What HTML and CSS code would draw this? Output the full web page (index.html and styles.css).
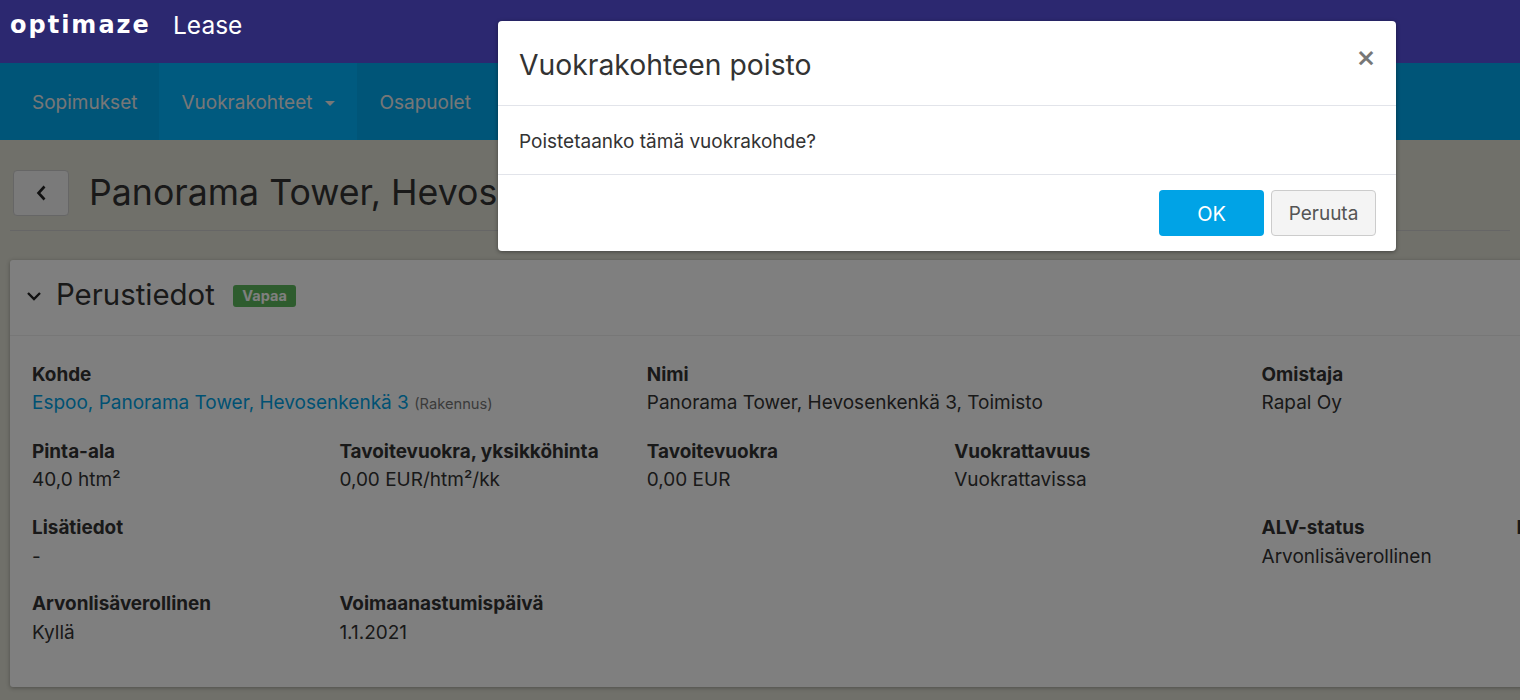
FILE: index.html
```html
<!DOCTYPE html>
<html lang="fi">
<head>
<meta charset="utf-8">
<title>Optimaze Lease</title>
<link rel="stylesheet" href="styles.css">
</head>
<body>
<header class="topbar">
  <span class="logo">optimaze</span>
  <span class="product">Lease</span>
</header>
<nav class="mainnav">
  <a class="navitem">Sopimukset</a>
  <a class="navitem navitem-active">Vuokrakohteet<span class="caret"></span></a>
  <a class="navitem">Osapuolet</a>
</nav>
<main class="page">
  <div class="titlerow">
    <button class="backbtn" aria-label="Takaisin">
      <svg width="14" height="20" viewBox="0 0 14 20"><path d="M10.5 3.5 L4.5 10 L10.5 16.5" fill="none" stroke="#222" stroke-width="2.6"/></svg>
    </button>
    <h1 class="pagetitle">Panorama Tower, Hevosenkenkä 3, Toimisto</h1>
  </div>
  <section class="card">
    <div class="cardhead">
      <svg class="chev" width="16" height="10" viewBox="0 0 16 10"><path d="M2 2 L8 8 L14 2" fill="none" stroke="#222" stroke-width="2.4"/></svg>
      <h2 class="cardtitle">Perustiedot</h2>
      <span class="badge">Vapaa</span>
    </div>
    <div class="fields">
      <div class="field span2"><div class="lbl">Kohde</div><div class="val"><a class="link">Espoo, Panorama Tower, Hevosenkenkä 3</a> <small class="note">(Rakennus)</small></div></div>
      <div class="field span2"><div class="lbl">Nimi</div><div class="val">Panorama Tower, Hevosenkenkä 3, Toimisto</div></div>
      <div class="field"><div class="lbl">Omistaja</div><div class="val">Rapal Oy</div></div>

      <div class="field"><div class="lbl">Pinta-ala</div><div class="val">40,0 htm²</div></div>
      <div class="field"><div class="lbl">Tavoitevuokra, yksikköhinta</div><div class="val">0,00 EUR/htm²/kk</div></div>
      <div class="field"><div class="lbl">Tavoitevuokra</div><div class="val">0,00 EUR</div></div>
      <div class="field"><div class="lbl">Vuokrattavuus</div><div class="val">Vuokrattavissa</div></div>
      <div class="field"></div>

      <div class="field span4"><div class="lbl">Lisätiedot</div><div class="val">-</div></div>
      <div class="field alv"><div class="lbl">ALV-status</div><div class="val">Arvonlisäverollinen</div><div class="lbl extra">I</div></div>

      <div class="field"><div class="lbl">Arvonlisäverollinen</div><div class="val">Kyllä</div></div>
      <div class="field"><div class="lbl">Voimaanastumispäivä</div><div class="val">1.1.2021</div></div>
    </div>
  </section>
</main>
<div class="backdrop"></div>
<div class="modal" role="dialog">
  <div class="modalhead">
    <h3 class="modaltitle">Vuokrakohteen poisto</h3>
    <span class="close">×</span>
  </div>
  <div class="modalbody">Poistetaanko tämä vuokrakohde?</div>
  <div class="modalfoot">
    <button class="btn btn-ok">OK</button>
    <button class="btn btn-cancel">Peruuta</button>
  </div>
</div>
</body>
</html>
```
FILE: styles.css
```css
* { box-sizing: border-box; }
html, body { margin: 0; height: 100%; overflow: hidden; }
body {
  font-family: "Inter", "Open Sans", sans-serif;
  font-size: 19px;
  line-height: 28.8px;
  color: #333;
  background: #e0e0d4;
  width: 1520px;
  height: 700px;
  position: relative;
}
.topbar {
  position: relative;
  z-index: 20;
  height: 63px;
  background: #2c2870;
  display: flex;
  align-items: flex-start;
  padding: 6px 0 0 10px;
  color: #fff;
}
.logo {
  font-family: "DejaVu Sans", sans-serif;
  font-weight: 700;
  font-size: 24px;
  line-height: 39px;
  letter-spacing: 2px;
  width: 163px;
}
.product { font-size: 24.5px; line-height: 38px; }
.mainnav {
  height: 77px;
  display: flex;
  padding-left: 10px;
  background: #00aaf0;
}
.navitem {
  padding: 0 22px;
  line-height: 79px;
  color: #eee;
}
.navitem-active { background: #00b4ff; }
.caret {
  display: inline-block;
  margin-left: 13px;
  vertical-align: middle;
  border: 5px solid transparent;
  border-top-color: #eee;
  border-bottom: 0;
}
.page { padding: 30px 10px 0; }
.titlerow {
  display: flex;
  align-items: center;
  gap: 20px;
  height: 61px;
  padding-left: 3px;
  border-bottom: 1px solid #ccc;
}
.backbtn {
  width: 56px;
  height: 46px;
  background: #f4f4f4;
  border: 1px solid #ccc;
  border-radius: 4px;
  display: flex;
  align-items: center;
  justify-content: center;
  padding: 0;
  margin-top: -14px;
}
.pagetitle {
  margin: -16px 0 0;
  font-size: 35.7px;
  font-weight: 400;
  line-height: 46px;
  color: #333;
  white-space: nowrap;
}
.card {
  margin-top: 29px;
  width: 1600px;
  height: 427px;
  background: #fff;
  border-radius: 3px;
  box-shadow: 0 1px 4px rgba(0,0,0,.3);
}
.cardhead {
  height: 76px;
  border-bottom: 1px solid #eee;
  display: flex;
  align-items: center;
  padding-left: 16px;
  padding-bottom: 6px;
}
.chev { margin-right: 14px; margin-top: 3px; }
.cardtitle { margin: 0 18px 0 0; font-size: 29.4px; font-weight: 400; line-height: 1.2; }
.badge {
  background: #5cb85c;
  color: #fff;
  font-size: 14.5px;
  font-weight: 700;
  line-height: 22px;
  padding: 0 9.5px;
  border-radius: 3px;
  margin-top: 2px;
}
.fields {
  display: grid;
  grid-template-columns: repeat(5, 307.4px);
  row-gap: 18.5px;
  padding: 24.6px 0 0 22px;
}
.span2 { grid-column: span 2; }
.span4 { grid-column: span 4; }
.lbl { font-weight: 700; white-space: nowrap; font-size: 18.9px; }
.val { white-space: nowrap; }
.link { color: #00a3e6; }
.note { font-size: 14.7px; color: #777; }
.alv { position: relative; }
.extra { position: absolute; left: 255px; top: 0; }
.backdrop {
  position: absolute;
  inset: 0;
  background: rgba(0,0,0,.5);
  z-index: 10;
}
.modal {
  position: absolute;
  z-index: 30;
  left: 498px;
  top: 21px;
  width: 898px;
  height: 230px;
  background: #fff;
  border-radius: 4px;
  box-shadow: 0 1px 4px rgba(0,0,0,.4);
}
.modalhead {
  height: 85px;
  border-bottom: 1px solid #e2e4ea;
  display: flex;
  justify-content: space-between;
  padding: 0 20px 0 21px;
  align-items: center;
}
.modaltitle { margin: 5px 0 0; font-size: 28.3px; font-weight: 400; color: #333; }
.close { font-size: 30px; font-weight: 500; color: #777; line-height: 1; margin-bottom: 14px; }
.modalbody {
  height: 69px;
  border-bottom: 1px solid #e2e4ea;
  padding: 0 21px;
  line-height: 71px;
}
.modalfoot {
  display: flex;
  justify-content: flex-end;
  gap: 7px;
  padding: 15px 20px 0;
}
.btn {
  height: 46px;
  border-radius: 4px;
  font: inherit;
  padding: 3px 0 0;
}
.btn-ok { width: 105px; background: #00a3e6; color: #fff; border: 0; font-size: 20px; }
.btn-cancel { width: 105px; background: #f4f4f4; color: #555; border: 1px solid #ccc; }
```
